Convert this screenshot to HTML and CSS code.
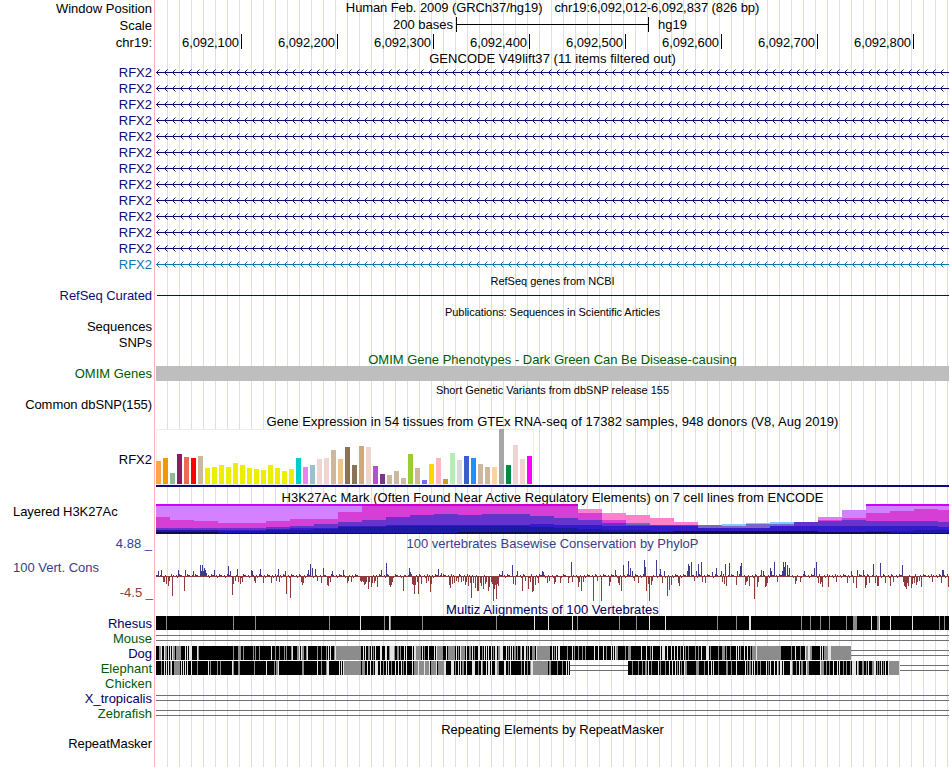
FILE: index.html
```html
<!DOCTYPE html>
<html lang="en">
<head>
    <meta charset="UTF-8">
    <title>chr19:6,092,012-6,092,837 Genome Browser</title>
    <link rel="stylesheet" href="styles.css">
</head>
<body>

    <div class="browser">
        <!-- Position and ruler -->
        <div class="row ruler-row">
            <div class="label">Window Position</div>
            <div class="title position"><span>Human Feb. 2009 (GRCh37/hg19)</span><span>chr19:6,092,012-6,092,837 (826 bp)</span></div>
        </div>
        <div class="row ruler-row">
            <div class="label">Scale</div>
            <div class="scale"><span class="scale-text">200 bases</span><span class="scale-bar"></span><span>hg19</span></div>
        </div>
        <div class="row ruler-row">
            <div class="label">chr19:</div>
            <div class="ruler">
                <span>6,092,100</span><span>6,092,200</span><span>6,092,300</span><span>6,092,400</span><span>6,092,500</span><span>6,092,600</span><span>6,092,700</span><span>6,092,800</span>
            </div>
        </div>

        <!-- GENCODE -->
        <div class="row gencode-title"><div class="title wide">GENCODE V49lift37 (11 items filtered out)</div></div>
        <div id="genes"></div>

        <!-- RefSeq -->
        <div class="row small-title"><div class="title">RefSeq genes from NCBI</div></div>
        <div class="row"><div class="label navy tight">RefSeq Curated</div><div class="intron"></div></div>

        <!-- Publications -->
        <div class="row small-title"><div class="title tight">Publications: Sequences in Scientific Articles</div></div>
        <div class="row"><div class="label">Sequences</div></div>
        <div class="row snps"><div class="label">SNPs</div></div>

        <!-- OMIM -->
        <div class="row omim-title"><div class="title green">OMIM Gene Phenotypes - Dark Green Can Be Disease-causing</div></div>
        <div class="row"><div class="label green">OMIM Genes</div><div class="omim-bar"></div></div>

        <!-- dbSNP -->
        <div class="row small-title"><div class="title">Short Genetic Variants from dbSNP release 155</div></div>
        <div class="row"><div class="label tight">Common dbSNP(155)</div></div>

        <!-- GTEx -->
        <div class="row big-title"><div class="title wide">Gene Expression in 54 tissues from GTEx RNA-seq of 17382 samples, 948 donors (V8, Aug 2019)</div></div>
        <div class="row gtex-row">
            <div class="label">RFX2</div>
            <div class="gtex"><div class="gtex-box" id="gtex"></div></div>
        </div>

        <!-- ENCODE regulation -->
        <div class="row big-title h3k-title"><div class="title wide">H3K27Ac Mark (Often Found Near Active Regulatory Elements) on 7 cell lines from ENCODE</div></div>
        <div class="row h3k-row">
            <div class="label left tight">Layered H3K27Ac</div>
            <svg id="h3k" width="793" height="30" viewBox="156 0 793 30" shape-rendering="crispEdges"></svg>
        </div>

        <!-- Conservation -->
        <div class="row big-title"><div class="label slate">4.88 _</div><div class="title slate">100 vertebrates Basewise Conservation by PhyloP</div></div>
        <div class="row cons-row">
            <div class="cons-labels"><span class="slate">100 Vert. Cons</span><span class="low">-4.5 _</span></div>
            <svg id="phylop" width="793" height="50" viewBox="156 551 793 50" shape-rendering="crispEdges"></svg>
        </div>

        <!-- Multiz -->
        <div class="row multiz-title"><div class="title darkblue wide">Multiz Alignments of 100 Vertebrates</div></div>
        <div class="row"><div class="label darkblue">Rhesus</div><svg class="align" id="rhesus" width="793" height="15" viewBox="156 0 793 15"></svg></div>
        <div class="row"><div class="label green">Mouse</div><svg class="align" id="mouse" width="793" height="15" viewBox="156 0 793 15"></svg></div>
        <div class="row"><div class="label darkblue">Dog</div><svg class="align" id="dog" width="793" height="15" viewBox="156 0 793 15"></svg></div>
        <div class="row"><div class="label green">Elephant</div><svg class="align" id="elephant" width="793" height="15" viewBox="156 0 793 15"></svg></div>
        <div class="row"><div class="label green">Chicken</div></div>
        <div class="row"><div class="label darkblue">X_tropicalis</div><svg class="align" id="xtrop" width="793" height="15" viewBox="156 0 793 15"></svg></div>
        <div class="row"><div class="label green">Zebrafish</div><svg class="align" id="zebrafish" width="793" height="15" viewBox="156 0 793 15"></svg></div>

        <!-- RepeatMasker -->
        <div class="row repeat-title"><div class="title">Repeating Elements by RepeatMasker</div></div>
        <div class="row"><div class="label tight">RepeatMasker</div></div>
    </div>

    <script src="script.js"></script>
</body>
</html>
```
FILE: styles.css
```css
/* Global Styles */
body {
    margin: 0;
    background: #fff;
    color: #000;
    font-family: "Liberation Sans", Arial, sans-serif;
    font-size: 13px;
    overflow: hidden;
}

.browser {
    width: 949px;
    height: 767px;
    background:
        linear-gradient(#ffb4b4, #ffb4b4) 154px 0 / 1px 100% no-repeat,
        repeating-linear-gradient(to right, transparent 0, transparent 11px, #dcdcf8 11px, #dcdcf8 12px) 156px 0 / 793px 100% no-repeat;
}

/* Rows */
.row {
    display: flex;
    align-items: center;
    height: 15px;
    line-height: 15px;
    white-space: nowrap;
}

.label {
    width: 152px;
    margin-right: 4px;
    flex: none;
    text-align: right;
}

.label.left {
    width: 139px;
    padding-left: 13px;
    text-align: left;
}

.title {
    flex: 1;
    text-align: center;
}

.row > .title:first-child {
    margin-left: 156px;
}

.wide { letter-spacing: 0.05px; }
.tight { letter-spacing: -0.06px; }

.navy { color: #0c0c78; }
.blue { color: #0c78b4; }
.green { color: #005a05; }
.slate { color: #3c3c8c; }
.darkblue { color: #000064; }

/* Ruler */
.ruler-row {
    height: 17px;
}

.ruler-row .label {
    padding-bottom: 1px;
}

.position {
    display: flex;
    justify-content: center;
    gap: 12px;
    padding-bottom: 2px;
    letter-spacing: -0.1px;
}

.scale {
    display: flex;
    align-items: center;
    height: 15px;
    padding-bottom: 2px;
}

.scale-text {
    width: 297px;
    margin-right: 3px;
    text-align: right;
}

.scale-bar {
    width: 191px;
    height: 15px;
    margin-right: 9px;
    border-left: 1px solid #000;
    border-right: 1px solid #000;
    background: linear-gradient(#000, #000) 0 7px / 100% 1px no-repeat;
}

.ruler {
    display: flex;
    height: 15px;
    padding-bottom: 2px;
    letter-spacing: -0.1px;
}

.ruler span {
    box-sizing: border-box;
    width: 96px;
    padding: 1px 2px 0 0;
    border-right: 1px solid #000;
    text-align: right;
}

.ruler span:first-child {
    width: 86px;
}

/* Track titles */
.gencode-title { height: 13px; }
.small-title { height: 16px; font-size: 11px; }
.snps { height: 16px; }
.omim-title { height: 16px; }
.big-title { height: 17px; }

.gencode-title .title,
.omim-title .title,
.big-title .title,
.multiz-title .title,
.repeat-title .title,
.small-title .title {
    padding-top: 2px;
}

.h3k-title .title {
    padding-top: 4px;
}

.big-title .label {
    padding-top: 1px;
}

/* Genes */
.gene {
    height: 16px;
}

.gene svg {
    fill: none;
    stroke: currentColor;
}

.intron {
    width: 792px;
    height: 1px;
    margin-left: 1px;
    background: #0c0c78;
}

.omim-bar {
    width: 793px;
    height: 15px;
    background: #bebebe;
}

/* GTEx bar chart */
.gtex-row {
    height: 58px;
}

.gtex-row .label {
    padding-top: 2px;
}

.gtex {
    width: 793px;
    height: 56px;
    border-bottom: 2px solid #0c0c78;
}

.gtex-box {
    display: flex;
    align-items: flex-end;
    gap: 2px;
    box-sizing: border-box;
    width: 378px;
    height: 56px;
    background: #fff;
    box-shadow: inset 0 0 0 1px #eee;
    padding-bottom: 1px;
}

.gtex-box span {
    width: 5px;
    flex: none;
}

/* Signal tracks */
.h3k-row {
    height: 30px;
}

.h3k-row .label {
    align-self: flex-start;
}

.cons-row {
    height: 50px;
}

.cons-labels {
    display: flex;
    flex-direction: column;
    justify-content: space-between;
    box-sizing: border-box;
    width: 156px;
    height: 50px;
    padding: 9px 3px 1px 13px;
}

.low {
    color: #8c3c3c;
    text-align: right;
}

.align {
    shape-rendering: crispEdges;
}
```
FILE: script.js
```javascript
function rect(x, y, w, h, fill) {
    return '<rect x="' + x + '" y="' + y + '" width="' + w + '" height="' + h + '" fill="' + fill + '"/>';
}

// Gene rows: intron line with strand arrows every 8px
let arrows = 'M0 8.5H793';
for (let x = 0.5; x < 793; x += 8) {
    arrows += 'M' + (x + 3) + ' 5.5L' + x + ' 8.5L' + (x + 3) + ' 11.5';
}
let genes = '';
for (let i = 0; i < 13; i++) {
    const color = i === 12 ? 'blue' : 'navy';
    genes += '<div class="row gene ' + color + '"><div class="label">RFX2</div>' +
        '<svg width="793" height="16"><path d="' + arrows + '"/></svg></div>';
}
document.getElementById('genes').innerHTML = genes;

// GTEx tissues
const heights = [23, 26, 11, 30, 27, 26, 28, 16, 17, 19, 17, 21, 19, 16, 15, 14, 19, 16, 13, 15, 26, 17, 19, 25, 26, 34, 25, 37,
    19, 38, 37, 18, 10, 9, 13, 6, 30, 16, 4, 20, 26, 5, 31, 24, 28, 26, 20, 17, 17, 55, 19, 39, 25, 28];
const tissueColors = ('FFA54F EE9A00 8FBC8F 8B1C62 EE6A50 FF0000 CDB79E ' + 'EEEE00 '.repeat(13) +
    '00CDCD EE82EE 9AC0CD EED5D2 EED5D2 CDB79E EEC591 8B7355 8B7355 CDAA7D EED5D2 B452CD 7A378B CDB79E CDB79E CDB79E ' +
    '9ACD32 CDB79E 7A67EE FFD700 FFB6C1 CD9B1D B4EEB4 D9D9D9 3A5FCD 1E90FF CDB79E CDB79E FFD39B A6A6A6 008B45 EED5D2 EED5D2 FF00FF').split(' ');
document.getElementById('gtex').innerHTML = heights.map(function (h, i) {
    return '<span style="height:' + h + 'px;background:#' + tissueColors[i] + '"></span>';
}).join('');

// H3K27Ac: each bin lists color + top of every layer
const layer = {
    T: '#cc00ff', U: '#cc00cc', P: '#d580ff', M: '#d53fd5', R: '#ff80cc', L: '#80ccff',
    G: '#7766cc', V: '#6633cc', B: '#331acc', D: '#1a1aa6', K: '#110d4d'
};
const bins = [
    'T0 P2 M13 V24 D26 K28', 'T0 P2 M16 V24 D26 K28', 'T0 P2 M17 V24 D26 K28', 'T0 P2 M19 V24 B26 D27 K29',
    'T0 P2 M19 V24 B26 D27 K29', 'T0 P2 M17 V23 B25 D26 K29', 'T0 P2 M15 V22 B24 D26 K29', 'T0 P2 M15 V20 B24 D25 K29',
    'T0 P2 M8 V18 B22 D23 K29', 'U0 M2 V16 B22 D23 K29', 'U0 M2 V13 B21 D22 K29', 'U0 M2 V11 B21 D22 K29',
    'U0 M2 V10 B21 D22 K29', 'U0 M2 V11 B21 D22 K28', 'U0 M2 V10 B21 D22 K28', 'U0 M2 V10 B21 D22 K28',
    'U0 M2 V12 B20 D23 K28', 'U0 M2 V14 B21 D24 K28', 'R5 M9 V16 B21 D25 K28', 'R9 M16 V19 B22 D26 K28',
    'R11 G19 V21 B22 D26 K28', 'R14 V21 B22 D27 K28', 'R18 V21 B22 K27', 'G21 B24 K27',
    'L20 G22 B24 K27', 'L19 G20 B24 K27', 'L18 G20 B22 K27', 'V18 B22 K27',
    'P13 M16 V17 B22 K28', 'P6 M14 V16 B22 K28', 'T0 P2 M9 V17 B22 D27 K28', 'T0 P2 M7 V17 B22 D27 K29',
    'T0 P2 M5 V17 B22 D26 K29', 'T0 P2 M6 V18 B23 D26 K29'
];
document.getElementById('h3k').innerHTML = bins.map(function (bin, i) {
    const x = i === 0 ? 156 : 146 + i * 24;
    const w = i === 0 ? 14 : 24;
    return bin.split(' ').map(function (s) {
        const top = Number(s.slice(1));
        return rect(x, top, w, 30 - top, layer[s[0]]);
    }).join('');
}).join('');

// PhyloP scores, "x:height"
const peaks = `158:5 161:6 163:-5 164:-5 166:-7 168:-9 169:-4 172:-19 178:6 184:-14 185:6 193:5 200:11 201:5 202:11 203:5 204:8 205:6 206:3
214:6 228:10 230:5 232:-18 233:-7 235:-4 237:7 238:-5 240:-7 242:-5 251:6 252:5 254:-4 255:-6 260:7 263:-6 271:-6 276:-4 278:7 279:-5 285:5 286:-17 290:-21
301:-5 302:-8 303:-6 308:6 310:12 312:8 315:7 317:-4 321:-6 323:8 327:-8 328:-9 330:-5 332:5 343:6 347:-6 348:-4 351:-5 360:-4 361:-5 362:-4 363:-5
364:-8 365:-7 366:-5 368:-12 369:-5 371:-10 372:-6 374:-6 375:-4 377:-10 381:6 386:13 389:-8 390:-10 391:-8 392:-5 403:-14 409:8 410:4 412:-7 413:-8 414:-17 415:-8 417:-5 418:-17
421:-7 426:-6 428:-4 430:-15 431:-7 438:7 441:3 449:-8 450:-11 452:-7 454:-6 456:-4 458:-5 461:-5 463:-4 465:-8 466:-5 468:-9 470:-6 471:-21 473:-6 475:-11 477:-14 478:-14
480:-6 481:-9 483:-12 485:-7 486:-5 488:-14 489:-10 491:-5 492:-7 493:-22 494:-12 495:-8 496:-22 497:-7 498:-9 502:5 512:11 513:-7 515:-8 517:5 522:-14 525:-4 528:-12 530:-5
532:-15 533:-14 535:-8 538:-6 542:5 543:4 547:-6 549:-4 554:-7 555:-5 560:-6 568:-6 571:14 572:-5 578:-10 579:-5 581:-14 583:-5 593:-22 597:-4 601:-22 609:-9 610:-5 615:6 618:-6 619:-8
621:-14 623:11 628:15 630:8 632:5 634:-4 638:-6 644:16 645:9 646:-14 648:-7 649:-22 651:-8 652:-4 656:16 660:7 662:-6 664:5 667:-19 669:-13 671:-8 678:-6 679:-9
687:5 688:12 689:10 691:14 694:-4 696:5 698:12 701:14 702:-5 705:-6 712:4 716:8 721:5 722:-5 724:-7 725:12 726:-9 729:13 736:-8 737:5 740:10 741:13 745:-8 746:-5 747:-4 749:-9
754:-22 757:-10 758:-5 761:6 763:5 765:-10 766:-9 767:-6 770:8 771:5 774:14 777:-5 782:5 783:14 784:9 785:14 787:11 789:8 795:-7 796:-4 800:-5 804:5 814:8 816:14 818:-6 820:-7
821:-5 822:-10 828:-10 836:-5 847:-6 851:5 853:-6 856:-11 857:6 863:6 865:-11 866:-8 869:-6 873:12 875:-6 877:-9 878:-9 880:13 885:-6 890:-9 893:-5 902:11 903:-5 904:-9 905:-10 906:-12
907:-6 908:-9 911:-11 912:-7 914:-6 916:-8 917:-5 919:-4 921:-10 932:-5 941:-6 942:6 943:6 948:-10`;
const scores = {};
peaks.split(/\s+/).forEach(function (p) {
    const pair = p.split(':');
    scores[pair[0]] = Number(pair[1]);
});
const background = [1, -1, 2, -1, 0, 1, -2, -1, 2, 1, -1, 0, 1, 3, 0, -2, 1, -1, 1];
let bars = '';
for (let x = 156; x < 949; x++) {
    const s = x in scores ? scores[x] : background[(x * 7 + (x >> 3)) % 19];
    if (s > 0) {
        bars += rect(x, 576 - s, 1, s, '#3c3c8c') + rect(x, 576, 1, 1, '#8c3c3c');
    } else {
        bars += rect(x, 576, 1, 1 - s, '#8c3c3c');
    }
    if (s === -22 && x !== 496 && x !== 754) {
        bars += rect(x, 599, 1, 2, '#ff00ff');
    }
}
document.getElementById('phylop').innerHTML = bars;

// Alignments: black block with g (grey) and w (light) marks, "x.width"
function gap(from, to) {
    return rect(from, 4, to - from, 1, '#707070') + rect(from, 9, to - from, 1, '#707070');
}
function block(from, to, marks) {
    const inside = marks.trim().split(/\s+/).map(function (m) {
        const parts = m.slice(1).split('.');
        return rect(parts[0], 0, parts[1] || 1, 14, m[0] === 'g' ? '#8c8c8c' : '#e4e4e4');
    }).join('');
    return rect(from, 0, to - from, 14, '#000') + inside;
}

document.getElementById('rhesus').innerHTML = block(156, 949, `g166 g233 g255 g329 w360 g384 w389 g390 g422 g496 w534 w548 w572 g577
g619 g636 w649 w665 g717 g736 w749.2 g801 g810 g820 g829 g846 g853.4 w871 g877.2 w879 w890 w912 g939 g944`);

document.getElementById('dog').innerHTML = block(156, 851, `g159.2 w161 w164 g165.2 w168 w170 w172 g173.2 g176.5 w185 w187 w189.3 w197 g198
g233 g238.3 g243 g253 g255 g259 w271 g275 g279 g284 g286 g291 w292 g297.2 w299 w301 g302.2 g306 w307 g317 g321 g326 w328 w330 g334 w335
g336.25 w363 w365 g368.2 w371 g373 w375 w380.2 w385.2 g389 w390.4 g394 g397.2 g400 w404 w406 w412 w414.2 g417
g416 g418.3 w422 g424 w428 w434 w436 g437.6 w446 g448.7 w456 g458 w460 g461.4 w466 g469.2 w472 g474 w478.2 g482 w484.1 w486 w488
w491 g493 w495.2 g498.2 w500.3 w506 g508 w510 w512 g514.2 g517 g520 w521 w524.2 g527 w529 g532 g533.2 w536.1 g537.13 w552 g554 w556 w558.2 g567 w572 g574 g578
g582 g585 w594 w598.1 w603 g606 w611 w613 w615 g616.2 g625 g628.3 w641 w646 g650 w652 w660 w662.3 w667 w671.1 w674 w677 g680 w683 g685 g688 g695
g698 w701 w706.3 g710 g718 g722.3 g726 g730 w736 w738 g740 w744 w747 g750 g752.4 w756 g757.24 g791 w795 g800 w805 g806.2 w808.2 g810.2 w820 w822 g824.4 w828.3 g831.20`) + gap(851, 949);

document.getElementById('elephant').innerHTML = block(156, 570, `g161 w164 w166 w168 g170 w171 g174.6 w181 w183 w185 w187 w191 g197 w208 g210 g217 g220 w232 g233
g238.2 g254 w266 g274 g276.2 w278 g302.2 w317 g321 g326 w327.2 w339 w341 w343 g344.17 g362.3 w367 w370 g373 w375 w376.2 w380 g383 w386
w388 g391 w395 w398 w401 g403 w406 w412 g414.4 w418 g419.5 w424 g425.4 w429 g431.5 w436 g438.6 w444.2 w451.3 g455 w458 w460.1
g462.2 w466 w472.3 g478 w481 g482 w486 w488.2 w491 w495.2 g497.2 w504.2 g508 w510 g521 w524 g527 g530 w531.2 g533.15 g549.2 g557 g562 w566 w568`) + gap(570, 628) +
    block(628, 899, `g632 g638 g642 g645.2 w648 g651 w658 g660 g665 w669 w672 w675 g677 w679 g681 w684 g685.2 g696.2 g698 g704 w708 w711 w713 g718
g726.2 g731 w736 w745 g747 g749.2 w752 w754 g757 g760 w766 g768 w770 w774 w777 g778 w780.2 w783 w790.2 g792 g796 w799 g801.2 w806 g807.2
w820 g821.3 g826 g829 w833 w837 w839 g843 g846 g850 w852 w853.3 w857 g858 g862.2 g866 w868 g872.2 w874.2 g877 g879 w881 g883 w885 w888 g889.10`) + gap(900, 949);

['mouse', 'xtrop', 'zebrafish'].forEach(function (id) {
    document.getElementById(id).innerHTML = gap(156, 949);
});
```
